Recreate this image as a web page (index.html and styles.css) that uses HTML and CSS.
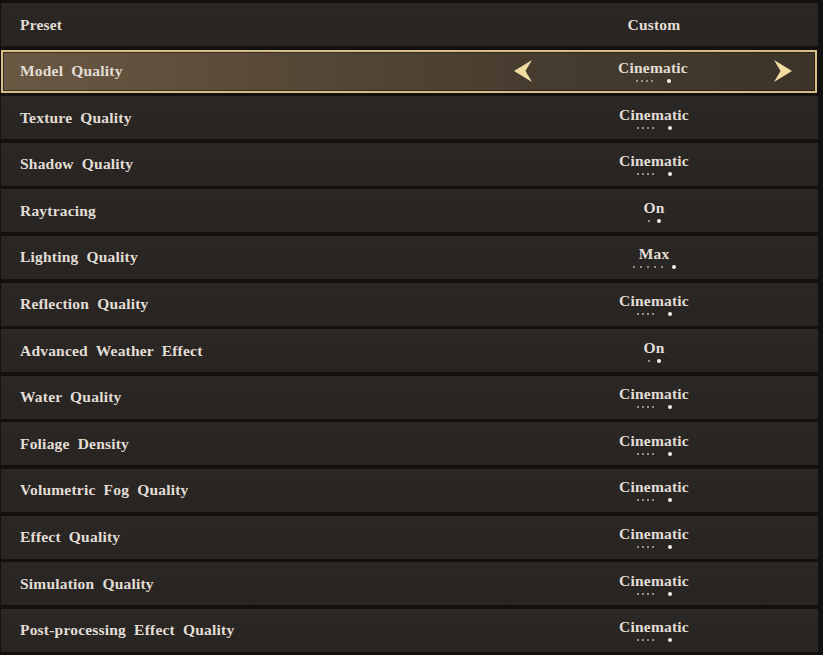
FILE: index.html
```html
<!DOCTYPE html>
<html>
<head>
<meta charset="utf-8">
<link rel="stylesheet" href="styles.css">
</head>
<body>
<div class="list">
  <div class="row">
    <div class="label">Preset</div>
    <div class="value"><span class="arrow"></span><div class="val plain"><div class="txt">Custom</div></div><span class="arrow"></span></div>
  </div>
  <div class="row active">
    <div class="label">Model Quality</div>
    <div class="value">
      <span class="arrow"><svg width="20" height="24" viewBox="0 0 20 24"><path d="M19 1 L1 12 L19 23 L12.5 12 Z" fill="#f2dca2"/></svg></span>
      <div class="val"><div class="txt">Cinematic</div><div class="dots d5"><i></i><i></i><i></i><i></i><b></b></div></div>
      <span class="arrow"><svg width="20" height="24" viewBox="0 0 20 24"><path d="M1 1 L19 12 L1 23 L7.5 12 Z" fill="#f2dca2"/></svg></span>
    </div>
  </div>
  <div class="row"><div class="label">Texture Quality</div><div class="value"><span class="arrow"></span><div class="val"><div class="txt">Cinematic</div><div class="dots d5"><i></i><i></i><i></i><i></i><b></b></div></div><span class="arrow"></span></div></div>
  <div class="row"><div class="label">Shadow Quality</div><div class="value"><span class="arrow"></span><div class="val"><div class="txt">Cinematic</div><div class="dots d5"><i></i><i></i><i></i><i></i><b></b></div></div><span class="arrow"></span></div></div>
  <div class="row"><div class="label">Raytracing</div><div class="value"><span class="arrow"></span><div class="val"><div class="txt">On</div><div class="dots d2"><i></i><b></b></div></div><span class="arrow"></span></div></div>
  <div class="row"><div class="label">Lighting Quality</div><div class="value"><span class="arrow"></span><div class="val"><div class="txt">Max</div><div class="dots d6"><i></i><i></i><i></i><i></i><i></i><b></b></div></div><span class="arrow"></span></div></div>
  <div class="row"><div class="label">Reflection Quality</div><div class="value"><span class="arrow"></span><div class="val"><div class="txt">Cinematic</div><div class="dots d5"><i></i><i></i><i></i><i></i><b></b></div></div><span class="arrow"></span></div></div>
  <div class="row"><div class="label">Advanced Weather Effect</div><div class="value"><span class="arrow"></span><div class="val"><div class="txt">On</div><div class="dots d2"><i></i><b></b></div></div><span class="arrow"></span></div></div>
  <div class="row"><div class="label">Water Quality</div><div class="value"><span class="arrow"></span><div class="val"><div class="txt">Cinematic</div><div class="dots d5"><i></i><i></i><i></i><i></i><b></b></div></div><span class="arrow"></span></div></div>
  <div class="row"><div class="label">Foliage Density</div><div class="value"><span class="arrow"></span><div class="val"><div class="txt">Cinematic</div><div class="dots d5"><i></i><i></i><i></i><i></i><b></b></div></div><span class="arrow"></span></div></div>
  <div class="row"><div class="label">Volumetric Fog Quality</div><div class="value"><span class="arrow"></span><div class="val"><div class="txt">Cinematic</div><div class="dots d5"><i></i><i></i><i></i><i></i><b></b></div></div><span class="arrow"></span></div></div>
  <div class="row"><div class="label">Effect Quality</div><div class="value"><span class="arrow"></span><div class="val"><div class="txt">Cinematic</div><div class="dots d5"><i></i><i></i><i></i><i></i><b></b></div></div><span class="arrow"></span></div></div>
  <div class="row"><div class="label">Simulation Quality</div><div class="value"><span class="arrow"></span><div class="val"><div class="txt">Cinematic</div><div class="dots d5"><i></i><i></i><i></i><i></i><b></b></div></div><span class="arrow"></span></div></div>
  <div class="row"><div class="label">Post-processing Effect Quality</div><div class="value"><span class="arrow"></span><div class="val"><div class="txt">Cinematic</div><div class="dots d5"><i></i><i></i><i></i><i></i><b></b></div></div><span class="arrow"></span></div></div>
</div>
</body>
</html>
```

FILE: styles.css
```css
html, body {
  margin: 0;
  padding: 0;
  background: #131110;
  width: 823px;
  height: 655px;
  overflow: hidden;
}
.list {
  display: flex;
  flex-direction: column;
  gap: 3.6px;
  padding: 3px 5px 0 1px;
}
.row {
  height: 43px;
  box-sizing: border-box;
  display: flex;
  align-items: center;
  background: linear-gradient(180deg, #2a2725 0%, #272422 100%);
  font-family: "Liberation Serif", "Times New Roman", serif;
  font-weight: bold;
  color: #e2ddd4;
  font-size: 15.5px;
  letter-spacing: 0.2px;
  word-spacing: 4px;
}
.row.active {
  background: linear-gradient(90deg, #6a5843 0%, #5a4b38 30%, #463c2f 65%, #3c3429 100%);
  border: 2px solid #d7be88;
  box-shadow: inset 0 0 0 1px rgba(30, 22, 12, 0.6);
  width: 816px;
}
.label {
  flex: 1;
  padding-left: 19px;
}
.row.active .label {
  padding-left: 17px;
}
.value {
  width: 328px;
  display: flex;
  align-items: center;
  padding: 0 24px;
  box-sizing: border-box;
}
.row.active .value {
  width: 326px;
  padding-right: 22px;
}
.arrow {
  width: 20px;
  height: 24px;
  display: flex;
}
.val {
  flex: 1;
  display: flex;
  flex-direction: column;
  align-items: center;
  padding-top: 2px;
}
.val.plain {
  padding-top: 0;
}
.txt {
  line-height: 16px;
}
.dots {
  display: flex;
  align-items: center;
  height: 6px;
  margin-top: 2px;
  gap: 3px;
}
.dots i {
  width: 2px;
  height: 2px;
  border-radius: 50%;
  background: #b9b4ac;
}
.dots b {
  width: 4px;
  height: 4px;
  border-radius: 50%;
  background: #f4f1ec;
  margin-left: 11px;
}
.dots.d2 b { margin-left: 4px; }
.dots.d6 { gap: 5px; }
.dots.d6 b { margin-left: 4px; }
```
